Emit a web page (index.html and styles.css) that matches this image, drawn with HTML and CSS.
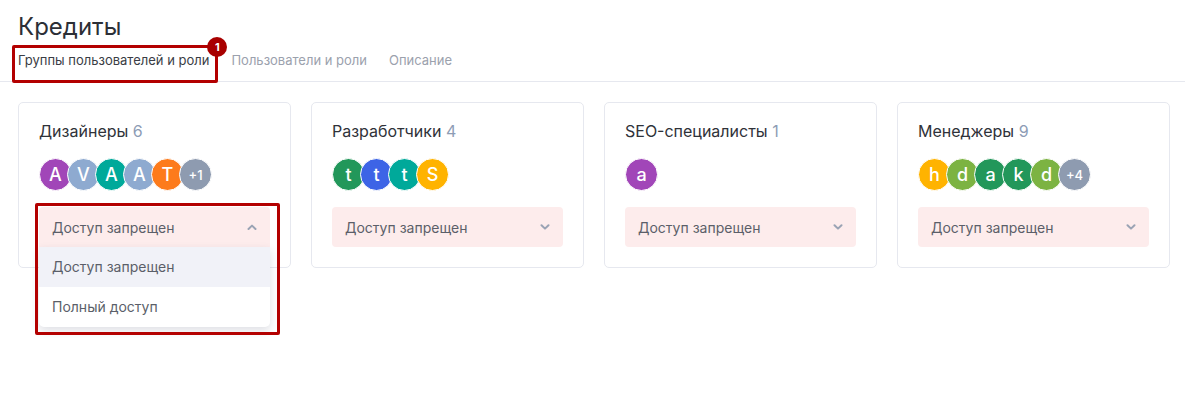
FILE: index.html
```html
<!DOCTYPE html>
<html lang="ru">
<head>
    <meta charset="UTF-8">
    <meta name="viewport" content="width=device-width, initial-scale=1.0">
    <title>Кредиты</title>
    <link rel="stylesheet" href="styles.css">
</head>
<body>
    <header class="page-header">
        <h1>Кредиты</h1>
        <nav class="tabs">
            <a class="tab active" href="#groups">Группы пользователей и роли
                <span class="mark-box"></span>
                <span class="mark-badge">1</span>
            </a>
            <a class="tab" href="#users">Пользователи и роли</a>
            <a class="tab" href="#about">Описание</a>
        </nav>
    </header>

    <div class="cards">
        <!-- Дизайнеры -->
        <div class="card">
            <h3 class="card-title">Дизайнеры <span class="count">6</span></h3>
            <div class="avatars">
                <span class="avatar purple">A</span>
                <span class="avatar slate">V</span>
                <span class="avatar teal">A</span>
                <span class="avatar slate">A</span>
                <span class="avatar orange">T</span>
                <span class="avatar more">+1</span>
            </div>
            <div class="select-wrap">
                <div class="select open">
                    <span>Доступ запрещен</span>
                    <svg class="chevron" width="10" height="6" viewBox="0 0 10 6"><path d="M1.5 5 L5 1.6 L8.5 5" fill="none" stroke="currentColor" stroke-width="2" stroke-linecap="round" stroke-linejoin="round"/></svg>
                </div>
                <ul class="menu">
                    <li class="selected">Доступ запрещен</li>
                    <li>Полный доступ</li>
                </ul>
                <span class="mark-box menu-mark"></span>
            </div>
        </div>

        <!-- Разработчики -->
        <div class="card">
            <h3 class="card-title">Разработчики <span class="count">4</span></h3>
            <div class="avatars">
                <span class="avatar green">t</span>
                <span class="avatar blue">t</span>
                <span class="avatar teal">t</span>
                <span class="avatar yellow">S</span>
            </div>
            <div class="select">
                <span>Доступ запрещен</span>
                <svg class="chevron" width="10" height="6" viewBox="0 0 10 6"><path d="M1.5 1.2 L5 4.6 L8.5 1.2" fill="none" stroke="currentColor" stroke-width="2" stroke-linecap="round" stroke-linejoin="round"/></svg>
            </div>
        </div>

        <!-- SEO -->
        <div class="card">
            <h3 class="card-title">SEO-специалисты <span class="count">1</span></h3>
            <div class="avatars">
                <span class="avatar purple">a</span>
            </div>
            <div class="select">
                <span>Доступ запрещен</span>
                <svg class="chevron" width="10" height="6" viewBox="0 0 10 6"><path d="M1.5 1.2 L5 4.6 L8.5 1.2" fill="none" stroke="currentColor" stroke-width="2" stroke-linecap="round" stroke-linejoin="round"/></svg>
            </div>
        </div>

        <!-- Менеджеры -->
        <div class="card">
            <h3 class="card-title">Менеджеры <span class="count">9</span></h3>
            <div class="avatars">
                <span class="avatar yellow">h</span>
                <span class="avatar lime">d</span>
                <span class="avatar green">a</span>
                <span class="avatar green">k</span>
                <span class="avatar lime">d</span>
                <span class="avatar more">+4</span>
            </div>
            <div class="select">
                <span>Доступ запрещен</span>
                <svg class="chevron" width="10" height="6" viewBox="0 0 10 6"><path d="M1.5 1.2 L5 4.6 L8.5 1.2" fill="none" stroke="currentColor" stroke-width="2" stroke-linecap="round" stroke-linejoin="round"/></svg>
            </div>
        </div>
    </div>
</body>
</html>
```

FILE: styles.css
```css
html, body {
    min-height: 100%;
}
body {
    font-family: Inter, "Noto Sans", sans-serif;
    margin: 0;
    padding: 0;
    min-height: 397px;
    color: #30333b;
    background: #fff;
}
.page-header {
    border-bottom: 1px solid #e6e8ef;
}
.page-header h1 {
    margin: 0;
    padding: 11px 18px 0;
    font-size: 24px;
    font-weight: 400;
    line-height: 32px;
    color: #2c2f36;
}
.tabs {
    display: flex;
    gap: 22px;
    padding: 0 18px;
    height: 40px;
    align-items: center;
    margin-top: -2px;
}
.tab {
    position: relative;
    font-size: 13px;
    color: #9ba1ad;
    text-decoration: none;
    line-height: 18px;
    padding-bottom: 3px;
}
.tab.active {
    color: #3a3d45;
}
.mark-box {
    position: absolute;
    border: 3px solid #b30000;
    border-radius: 2px;
    pointer-events: none;
}
.tab .mark-box {
    left: -6px;
    right: -9px;
    top: -6px;
    bottom: -11px;
}
.mark-badge {
    position: absolute;
    right: -18px;
    top: -14px;
    width: 20px;
    height: 20px;
    border-radius: 50%;
    background: #a80000;
    color: #fff;
    font-size: 11px;
    font-weight: 700;
    line-height: 20px;
    text-align: center;
}
.cards {
    display: grid;
    grid-template-columns: repeat(4, 1fr);
    gap: 20px;
    padding: 20px 15px 20px 18px;
}
.card {
    border: 1px solid #e6e8ef;
    border-radius: 5px;
    padding: 18px 20px 20px;
}
.card-title {
    margin: 0;
    font-size: 16px;
    font-weight: 400;
    line-height: 20px;
    color: #2f3239;
}
.card-title .count {
    color: #8d9cb5;
}
.avatars {
    display: flex;
    margin-top: 17px;
    margin-bottom: 17px;
    height: 32px;
}
.avatar {
    width: 33px;
    height: 33px;
    box-sizing: border-box;
    border: 1px solid #fff;
    border-radius: 50%;
    color: #fff;
    font-size: 18px;
    font-weight: 500;
    display: flex;
    align-items: center;
    justify-content: center;
    margin-left: -5px;
}
.avatar:first-child {
    margin-left: 0;
}
.avatar.purple { background: #a146b8; }
.avatar.slate { background: #8eaad0; }
.avatar.teal { background: #00a99a; }
.avatar.orange { background: #fd7b1c; }
.avatar.green { background: #22975a; }
.avatar.blue { background: #3d64e6; }
.avatar.yellow { background: #ffb300; }
.avatar.lime { background: #7cb342; }
.avatar.more {
    background: #8e9bb0;
    font-size: 13px;
}
.select-wrap {
    position: relative;
}
.select {
    height: 40px;
    box-sizing: border-box;
    background: #fdecec;
    border-radius: 4px;
    display: flex;
    align-items: center;
    justify-content: space-between;
    padding: 0 13px 0 13px;
    font-size: 14px;
    color: #5b5f69;
}
.select.open {
    border-radius: 4px 4px 0 0;
}
.chevron {
    color: #9aa3b4;
}
.menu {
    position: absolute;
    left: 0;
    right: 0;
    top: 40px;
    list-style: none;
    margin: 0;
    padding: 0;
    background: #fff;
    border-radius: 0 0 5px 5px;
    box-shadow: 0 4px 10px rgba(40, 50, 80, 0.15);
    z-index: 2;
}
.menu li {
    height: 40px;
    line-height: 40px;
    padding: 0 13px;
    font-size: 14px;
    color: #5b5f69;
}
.menu li.selected {
    background: #f1f2f8;
}
.menu-mark {
    left: -4px;
    right: -10px;
    top: -4px;
    bottom: -88px;
    z-index: 3;
}
```
